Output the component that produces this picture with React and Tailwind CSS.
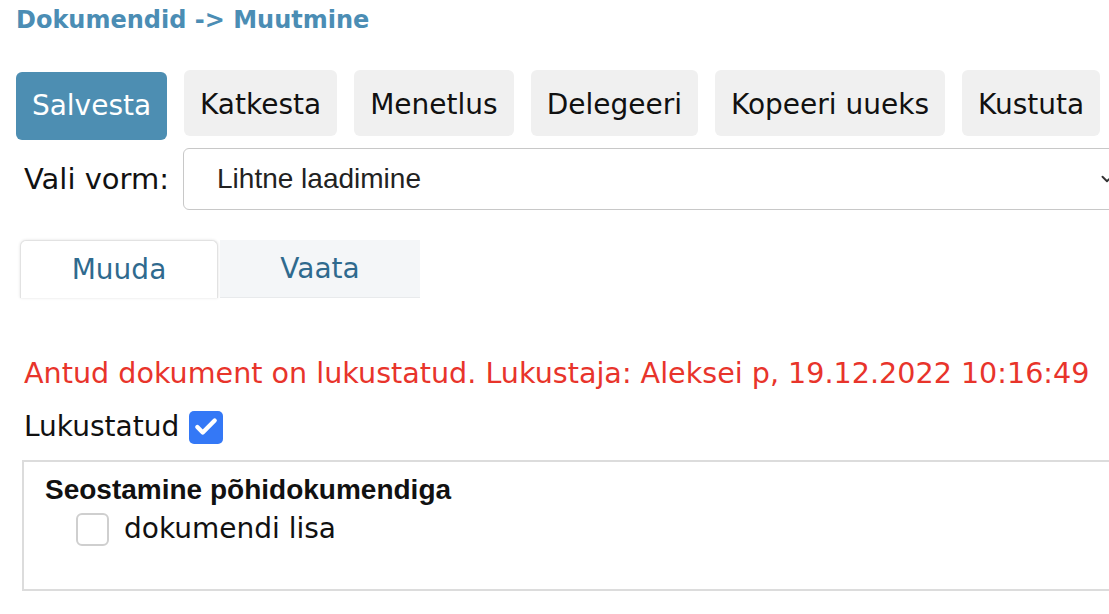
import { Check, ChevronDown } from "lucide-react";

const buttons = ["Katkesta", "Menetlus", "Delegeeri", "Kopeeri uueks", "Kustuta"];

export default function App() {
  return (
    <div className="w-[1109px] h-[614px] overflow-hidden bg-white text-[#111] font-['DejaVu_Sans',Verdana,sans-serif]">
      {/* breadcrumb */}
      <div className="pt-[5px] pl-[16px] text-[24px] leading-[30px] font-bold text-[#4b8db4]">
        Dokumendid -&gt; Muutmine
      </div>

      {/* toolbar */}
      <div className="flex items-start gap-[17px] pl-[16px] mt-[35px]">
        <button className="mt-[2px] h-[68px] w-[151px] rounded-[6px] bg-[#4d8eb2] text-white text-[28px] leading-[34px]">
          Salvesta
        </button>
        {buttons.map((b) => (
          <button
            key={b}
            className="h-[66px] px-[16px] pt-[3px] rounded-[6px] bg-[#f0f0f0] text-[28px] leading-[34px] text-[#111]"
          >
            {b}
          </button>
        ))}
      </div>

      {/* form selector */}
      <div className="flex items-center mt-[8px]">
        <span className="ml-[24px] shrink-0 whitespace-nowrap text-[29px] leading-[34px]">Vali vorm:</span>
        <div className="ml-[14px] w-[950px] h-[62px] shrink-0 flex items-center justify-between pl-[33px] pr-[16px] border border-[#c8c8c8] rounded-[6px] font-['Liberation_Sans',Arial,sans-serif] text-[28px] text-[#222]">
          <span>Lihtne laadimine</span>
          <ChevronDown size={18} strokeWidth={2.5} className="text-[#333]" />
        </div>
      </div>

      {/* tabs */}
      <div className="flex items-end pl-[20px] mt-[30px]">
        <div className="w-[198px] h-[58px] flex items-center justify-center rounded-t-[6px] border border-b-0 border-[#e2e2e2] shadow-[0_0_3px_rgba(0,0,0,0.12)] bg-white text-[28px] text-[#2f6a8e]">
          Muuda
        </div>
        <div className="ml-[2px] w-[200px] h-[58px] flex items-center justify-center bg-[#f4f6f8] border-b border-[#e8eaec] text-[28px] text-[#2f6a8e]">
          Vaata
        </div>
      </div>

      {/* lock message */}
      <div className="pl-[24px] mt-[58px] text-[28.6px] leading-[34px] text-[#e8342b] whitespace-nowrap">
        Antud dokument on lukustatud. Lukustaja: Aleksei p, 19.12.2022 10:16:49
      </div>

      <div className="flex items-center pl-[24px] mt-[20px]">
        <span className="text-[28px] leading-[34px]">Lukustatud</span>
        <span className="ml-[10px] w-[34px] h-[33px] rounded-[5px] bg-[#3478f6] flex items-center justify-center">
          <Check size={26} strokeWidth={4} className="text-white" />
        </span>
      </div>

      {/* relation box */}
      <div className="ml-[22px] mt-[16px] w-[1100px] h-[131px] border-2 border-[#dcdcdc] pl-[21px] pt-[14px]">
        <div className="font-['Liberation_Sans',Arial,sans-serif] font-bold text-[28px] leading-[28px] text-[#111]">
          Seostamine põhidokumendiga
        </div>
        <div className="flex items-center ml-[31px] mt-[8px]">
          <span className="w-[33px] h-[33px] rounded-[6px] border-2 border-[#cfcfcf] bg-white"></span>
          <span className="ml-[15px] text-[28px] leading-[34px]">dokumendi lisa</span>
        </div>
      </div>
    </div>
  );
}
